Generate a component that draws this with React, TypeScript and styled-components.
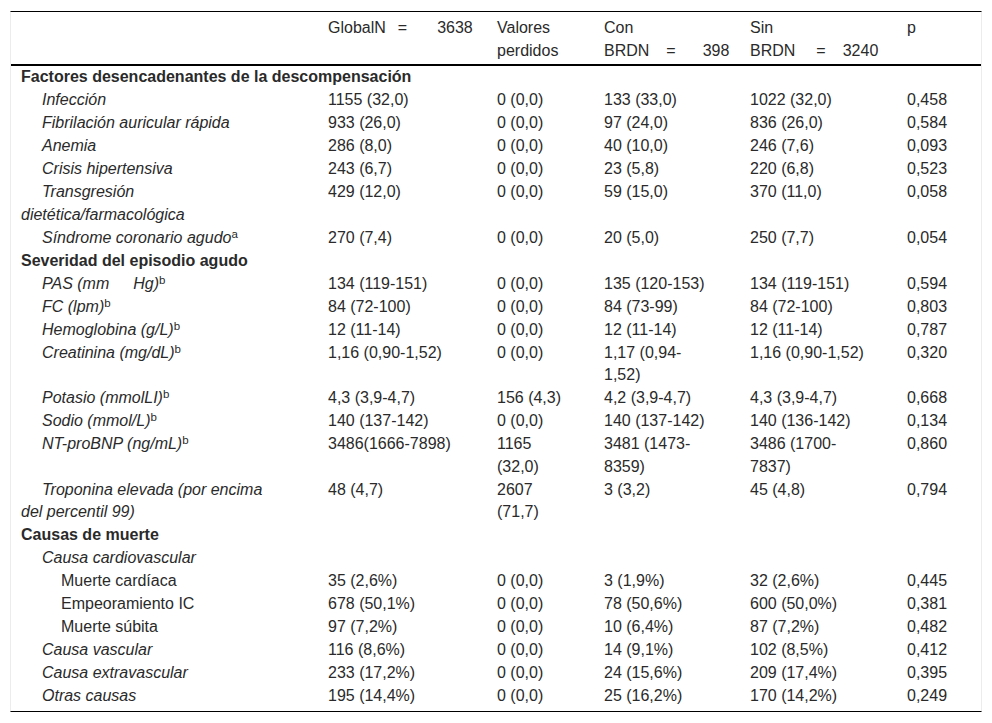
import { Fragment, ReactNode } from 'react';
import styled, { createGlobalStyle } from 'styled-components';

const GlobalStyle = createGlobalStyle`
  html, body {
    margin: 0;
    padding: 0;
    background: #fff;
  }
  body {
    font-family: 'Liberation Sans', Arial, sans-serif;
    color: #2a2a2a;
  }
`;

const Frame = styled.div`
  box-sizing: border-box;
  width: 972px;
  margin: 11px 10px 0;
  padding-bottom: 3px;
  border-top: 1px solid #000;
  border-bottom: 1px solid #000;
  border-left: 1px solid #ececec;
  border-right: 1px solid #ececec;
`;

const Table = styled.table`
  width: 100%;
  border-collapse: collapse;
  table-layout: fixed;
  font-size: 16px;
  line-height: 22.5px;
`;

const HeadCell = styled.th`
  padding: 5px 30px 2px 10px;
  text-align: left;
  vertical-align: top;
  font-weight: normal;
  border-bottom: 2px solid #000;
`;

const NoWrap = styled.span`
  display: block;
  white-space: nowrap;
`;

const Eq = styled.span<{ $before: number; $after: number }>`
  margin-left: ${(p) => p.$before}px;
  margin-right: ${(p) => p.$after}px;
`;

const Cell = styled.td`
  padding: 0.25px 30px 0.25px 10px;
  text-align: left;
  vertical-align: top;
`;

const Label = styled(Cell)<{ $level: 1 | 2; $italic: boolean }>`
  text-indent: ${(p) => (p.$level === 1 ? 21 : 40)}px;
  font-style: ${(p) => (p.$italic ? 'italic' : 'normal')};
`;

const Section = styled(Cell)`
  font-weight: bold;
`;

const Sup = styled.sup`
  font-size: 11.5px;
  font-style: normal;
  line-height: 0;
  vertical-align: 5px;
`;

type Item = {
  label: ReactNode;
  level?: 1 | 2;
  values?: string[];
};

type Group = {
  title: string;
  items: Item[];
};

const groups: Group[] = [
  {
    title: 'Factores desencadenantes de la descompensación',
    items: [
      { label: 'Infección', values: ['1155 (32,0)', '0 (0,0)', '133 (33,0)', '1022 (32,0)', '0,458'] },
      { label: 'Fibrilación auricular rápida', values: ['933 (26,0)', '0 (0,0)', '97 (24,0)', '836 (26,0)', '0,584'] },
      { label: 'Anemia', values: ['286 (8,0)', '0 (0,0)', '40 (10,0)', '246 (7,6)', '0,093'] },
      { label: 'Crisis hipertensiva', values: ['243 (6,7)', '0 (0,0)', '23 (5,8)', '220 (6,8)', '0,523'] },
      { label: 'Transgresión dietética/farmacológica', values: ['429 (12,0)', '0 (0,0)', '59 (15,0)', '370 (11,0)', '0,058'] },
      { label: <>Síndrome coronario agudo<Sup>a</Sup></>, values: ['270 (7,4)', '0 (0,0)', '20 (5,0)', '250 (7,7)', '0,054'] },
    ],
  },
  {
    title: 'Severidad del episodio agudo',
    items: [
      { label: <>PAS (mm{'\u2003\u2002'}Hg)<Sup>b</Sup></>, values: ['134 (119-151)', '0 (0,0)', '135 (120-153)', '134 (119-151)', '0,594'] },
      { label: <>FC (lpm)<Sup>b</Sup></>, values: ['84 (72-100)', '0 (0,0)', '84 (73-99)', '84 (72-100)', '0,803'] },
      { label: <>Hemoglobina (g/L)<Sup>b</Sup></>, values: ['12 (11-14)', '0 (0,0)', '12 (11-14)', '12 (11-14)', '0,787'] },
      { label: <>Creatinina (mg/dL)<Sup>b</Sup></>, values: ['1,16 (0,90-1,52)', '0 (0,0)', '1,17 (0,94-1,52)', '1,16 (0,90-1,52)', '0,320'] },
      { label: <>Potasio (mmolLI)<Sup>b</Sup></>, values: ['4,3 (3,9-4,7)', '156 (4,3)', '4,2 (3,9-4,7)', '4,3 (3,9-4,7)', '0,668'] },
      { label: <>Sodio (mmol/L)<Sup>b</Sup></>, values: ['140 (137-142)', '0 (0,0)', '140 (137-142)', '140 (136-142)', '0,134'] },
      { label: <>NT-proBNP (ng/mL)<Sup>b</Sup></>, values: ['3486(1666-7898)', '1165 (32,0)', '3481 (1473-8359)', '3486 (1700-7837)', '0,860'] },
      { label: 'Troponina elevada (por encima del percentil 99)', values: ['48 (4,7)', '2607 (71,7)', '3 (3,2)', '45 (4,8)', '0,794'] },
    ],
  },
  {
    title: 'Causas de muerte',
    items: [
      { label: 'Causa cardiovascular' },
      { label: 'Muerte cardíaca', level: 2, values: ['35 (2,6%)', '0 (0,0)', '3 (1,9%)', '32 (2,6%)', '0,445'] },
      { label: 'Empeoramiento IC', level: 2, values: ['678 (50,1%)', '0 (0,0)', '78 (50,6%)', '600 (50,0%)', '0,381'] },
      { label: 'Muerte súbita', level: 2, values: ['97 (7,2%)', '0 (0,0)', '10 (6,4%)', '87 (7,2%)', '0,482'] },
      { label: 'Causa vascular', values: ['116 (8,6%)', '0 (0,0)', '14 (9,1%)', '102 (8,5%)', '0,412'] },
      { label: 'Causa extravascular', values: ['233 (17,2%)', '0 (0,0)', '24 (15,6%)', '209 (17,4%)', '0,395'] },
      { label: 'Otras causas', values: ['195 (14,4%)', '0 (0,0)', '25 (16,2%)', '170 (14,2%)', '0,249'] },
    ],
  },
];

const colWidths = [307, 169, 107, 146, 157, 84];

const App = () => {
  return (
    <>
      <GlobalStyle />
      <Frame>
        <Table>
          <colgroup>
            {colWidths.map((w, i) => (
              <col key={i} width={w} />
            ))}
          </colgroup>
          <thead>
            <tr>
              <HeadCell />
              <HeadCell>
                <NoWrap>
                  GlobalN<Eq $before={12} $after={30}>=</Eq>3638
                </NoWrap>
              </HeadCell>
              <HeadCell>Valores perdidos</HeadCell>
              <HeadCell>
                Con
                <NoWrap>
                  BRDN<Eq $before={17} $after={27}>=</Eq>398
                </NoWrap>
              </HeadCell>
              <HeadCell>
                Sin
                <NoWrap>
                  BRDN<Eq $before={21} $after={17}>=</Eq>3240
                </NoWrap>
              </HeadCell>
              <HeadCell>p</HeadCell>
            </tr>
          </thead>
          <tbody>
            {groups.map((g) => (
              <Fragment key={g.title}>
                <tr>
                  <Section colSpan={6}>{g.title}</Section>
                </tr>
                {g.items.map((item, i) => {
                  const level = item.level ?? 1;
                  const values = item.values ?? ['', '', '', '', ''];
                  return (
                    <tr key={i}>
                      <Label $level={level} $italic={level === 1}>
                        {item.label}
                      </Label>
                      {values.map((v, j) => (
                        <Cell key={j}>{v}</Cell>
                      ))}
                    </tr>
                  );
                })}
              </Fragment>
            ))}
          </tbody>
        </Table>
      </Frame>
    </>
  );
};

export default App;
